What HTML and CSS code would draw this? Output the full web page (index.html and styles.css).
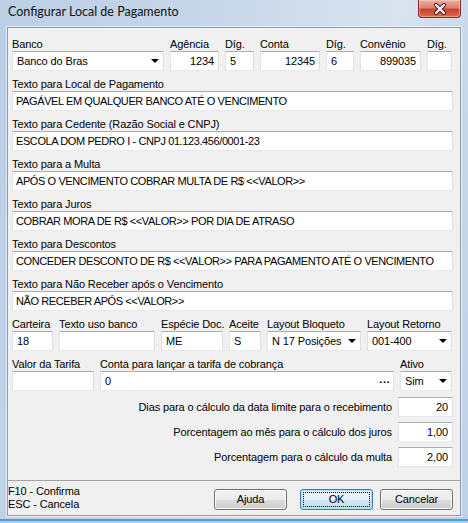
FILE: index.html
```html
<!DOCTYPE html>
<html lang="pt-BR">
<head>
<meta charset="utf-8">
<title>Configurar Local de Pagamento</title>
<link rel="stylesheet" href="styles.css">
</head>
<body>
<div class="window">
  <div class="titlebar">
    <span class="title">Configurar Local de Pagamento</span>
    <div class="close-btn">
      <svg width="14" height="12" viewBox="0 0 14 12">
        <path d="M3 2 L11 10 M11 2 L3 10" stroke="#4a1a12" stroke-width="4" stroke-linecap="round"/>
        <path d="M3 2 L11 10 M11 2 L3 10" stroke="#ffffff" stroke-width="2.2" stroke-linecap="round"/>
      </svg>
    </div>
  </div>
  <div class="client">
    <div class="main">
      <div class="groups">
        <div class="row">
          <div class="fg w-banco"><div class="lbl">Banco</div><div class="field select"><span class="val">Banco do Bras</span><span class="arrow"></span></div></div>
          <div class="fg w-agencia"><div class="lbl">Agência</div><div class="field num">1234</div></div>
          <div class="fg w-dig1"><div class="lbl">Díg.</div><div class="field">5</div></div>
          <div class="fg w-conta"><div class="lbl">Conta</div><div class="field num">12345</div></div>
          <div class="fg w-dig2"><div class="lbl">Díg.</div><div class="field">6</div></div>
          <div class="fg w-convenio"><div class="lbl">Convênio</div><div class="field num">899035</div></div>
          <div class="fg w-dig3"><div class="lbl">Díg.</div><div class="field"></div></div>
        </div>
        <div class="fg"><div class="lbl">Texto para Local de Pagamento</div><div class="field wide">PAGÁVEL EM QUALQUER BANCO ATÉ O VENCIMENTO</div></div>
        <div class="fg"><div class="lbl">Texto para Cedente (Razão Social e CNPJ)</div><div class="field wide">ESCOLA DOM PEDRO I - CNPJ 01.123.456/0001-23</div></div>
        <div class="fg"><div class="lbl">Texto para a Multa</div><div class="field wide">APÓS O VENCIMENTO COBRAR MULTA DE R$ &lt;&lt;VALOR&gt;&gt;</div></div>
        <div class="fg"><div class="lbl">Texto para Juros</div><div class="field wide">COBRAR MORA DE R$ &lt;&lt;VALOR&gt;&gt; POR DIA DE ATRASO</div></div>
        <div class="fg"><div class="lbl">Texto para Descontos</div><div class="field wide">CONCEDER DESCONTO DE R$ &lt;&lt;VALOR&gt;&gt; PARA PAGAMENTO ATÉ O VENCIMENTO</div></div>
        <div class="fg"><div class="lbl">Texto para Não Receber após o Vencimento</div><div class="field wide">NÃO RECEBER APÓS &lt;&lt;VALOR&gt;&gt;</div></div>
        <div class="row">
          <div class="fg w-carteira"><div class="lbl">Carteira</div><div class="field">18</div></div>
          <div class="fg w-uso"><div class="lbl">Texto uso banco</div><div class="field"></div></div>
          <div class="fg w-especie"><div class="lbl">Espécie Doc.</div><div class="field">ME</div></div>
          <div class="fg w-aceite"><div class="lbl">Aceite</div><div class="field">S</div></div>
          <div class="fg w-bloqueto"><div class="lbl">Layout Bloqueto</div><div class="field select"><span class="val">N 17 Posições</span><span class="arrow"></span></div></div>
          <div class="fg w-retorno"><div class="lbl">Layout Retorno</div><div class="field select"><span class="val">001-400</span><span class="arrow"></span></div></div>
        </div>
        <div class="row">
          <div class="fg w-tarifa"><div class="lbl">Valor da Tarifa</div><div class="field"></div></div>
          <div class="fg w-contatarifa"><div class="lbl">Conta para lançar a tarifa de cobrança</div><div class="field select"><span class="val">0</span><span class="dots">...</span></div></div>
          <div class="fg w-ativo"><div class="lbl">Ativo</div><div class="field select"><span class="val">Sim</span><span class="arrow"></span></div></div>
        </div>
      </div>
      <div class="params">
        <div class="param"><span>Dias para o cálculo da data limite para o recebimento</span><div class="field num">20</div></div>
        <div class="param"><span>Porcentagem ao mês para o cálculo dos juros</span><div class="field num">1,00</div></div>
        <div class="param"><span>Porcentagem para o cálculo da multa</span><div class="field num">2,00</div></div>
      </div>
    </div>
    <div class="footer">
      <div class="hints">
        <div>F10 - Confirma</div>
        <div>ESC - Cancela</div>
      </div>
      <div class="btn btn-ajuda">Ajuda</div>
      <div class="btn btn-ok"><span>OK</span></div>
      <div class="btn">Cancelar</div>
    </div>
  </div>
</div>
</body>
</html>
```
FILE: styles.css
```css
* { box-sizing: border-box; }
html, body { margin: 0; padding: 0; }
body {
  width: 468px;
  height: 523px;
  overflow: hidden;
  font-family: "Liberation Sans", Arial, sans-serif;
  font-size: 11px;
  letter-spacing: -0.12px;
  color: #000;
  background: #bfd1e6;
}
.window {
  width: 468px;
  height: 523px;
  display: flex;
  flex-direction: column;
  background:
    linear-gradient(to bottom, transparent 519px, #4a9fe0 519px, #4a9fe0 521px, #a9cdee 521px),
    linear-gradient(100deg, #bccfe5 0%, #c6d6e9 35%, #d8e3ef 72%, #c9d8ea 86%, #bfd1e6 100%);
}
.titlebar {
  height: 27px;
  display: flex;
  align-items: flex-start;
}
.title {
  font-family: Lato, "Noto Sans", sans-serif;
  font-size: 12.5px;
  letter-spacing: 0;
  line-height: 16px;
  padding: 4px 0 0 8px;
  color: #111;
}
.close-btn {
  margin-left: auto;
  margin-right: 7px;
  width: 43px;
  height: 18px;
  border: 1px solid #7a3024;
  border-top: none;
  border-radius: 0 0 4px 4px;
  background: linear-gradient(#eab0a4 0%, #dc8270 45%, #c9432b 55%, #d86c4e 100%);
  box-shadow: inset 0 0 0 1px rgba(255, 215, 205, 0.45);
  display: flex;
  align-items: center;
  justify-content: center;
}
.close-btn svg { display: block; }
.client {
  margin: 0 7px;
  height: 489px;
  border: 1px solid #8c9cb1;
  box-shadow: 0 0 0 1px rgba(255, 255, 255, 0.55);
  background: #f0f0f0;
  display: flex;
  flex-direction: column;
}
.main {
  height: 452px;
  padding: 10px 7px 0 4px;
}
.groups {
  display: flex;
  flex-direction: column;
  gap: 7px;
}
.row {
  display: flex;
  gap: 6px;
}
.lbl {
  height: 13px;
  line-height: 13px;
  white-space: nowrap;
}
.field {
  height: 20px;
  background: #fff;
  border: 1px solid;
  border-color: #abadb3 #dbdfe6 #e3e9ef #e2e3ea;
  line-height: 18px;
  padding: 0 4px;
  white-space: nowrap;
  overflow: hidden;
  display: flex;
  align-items: center;
}
.field.wide { padding-left: 3px; letter-spacing: -0.4px; }
.field.num { justify-content: flex-end; }
.select .val { flex: 1; }
.arrow {
  width: 0;
  height: 0;
  border-left: 4px solid transparent;
  border-right: 4px solid transparent;
  border-top: 4px solid #000;
}
.dots {
  font-weight: bold;
  letter-spacing: 0.5px;
  margin-right: -1px;
  position: relative;
  top: -2px;
}
.w-banco { width: 152px; }
.w-agencia { width: 49px; }
.w-dig1 { width: 29px; }
.w-conta { width: 60px; }
.w-dig2 { width: 28px; }
.w-convenio { width: 61px; }
.w-dig3 { width: 25px; }
.w-carteira { width: 41px; }
.w-uso { width: 96px; }
.w-especie { width: 62px; }
.w-aceite { width: 32px; }
.w-bloqueto { width: 94px; }
.w-retorno { width: 85px; }
.w-tarifa { width: 82px; }
.w-contatarifa { width: 294px; }
.w-ativo { width: 52px; }
.params {
  margin-top: 6px;
  display: flex;
  flex-direction: column;
  gap: 5px;
}
.param {
  display: flex;
  justify-content: flex-end;
  align-items: center;
  gap: 6px;
}
.param .field { width: 55px; }
.footer {
  height: 35px;
  border-top: 1px solid #a3a3a3;
  display: flex;
  align-items: flex-start;
  padding-right: 7px;
}
.hints {
  flex: 1;
  padding-top: 4px;
  line-height: 13px;
}
.btn {
  margin-top: 8px;
  width: 73px;
  height: 21px;
  border: 1px solid #707070;
  border-radius: 3px;
  background: linear-gradient(#f2f2f2 0%, #ebebeb 50%, #dddddd 50%, #cfcfcf 100%);
  box-shadow: inset 0 0 0 1px #fbfbfb;
  display: flex;
  align-items: center;
  justify-content: center;
  line-height: 13px;
}
.btn-ajuda { margin-right: 13px; }
.btn-ok {
  margin-right: 7px;
  border-color: #3c7fb1;
  background: linear-gradient(#f0f7fc 0%, #e4f0f9 50%, #d4e6f4 50%, #c8def0 100%);
  box-shadow: inset 0 0 0 1px #a6def8;
  outline: 1px dotted #000;
  outline-offset: -4px;
}
```
